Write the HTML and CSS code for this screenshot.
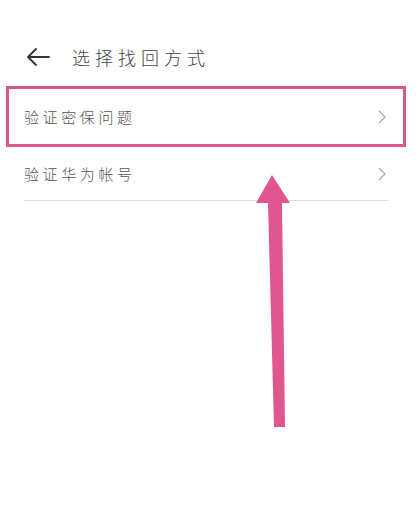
FILE: index.html
```html
<!DOCTYPE html>
<html lang="zh">
<head>
<meta charset="utf-8">
<link rel="stylesheet" href="styles.css">
</head>
<body>
<div class="page">
  <header class="header">
    <svg class="back" width="24" height="18" viewBox="0 0 24 18"><path d="M23 9H2M10 1L2 9l8 8" fill="none" stroke="#333" stroke-width="1.8" stroke-linecap="round" stroke-linejoin="round"/></svg>
    <h1 class="title">选择找回方式</h1>
  </header>
  <div class="list">
    <div class="row row-hl">
      <span class="label">验证密保问题</span>
      <svg class="chev" width="8" height="14" viewBox="0 0 8 14"><path d="M1 1l6 6-6 6" fill="none" stroke="#aaa" stroke-width="1.3"/></svg>
    </div>
    <div class="row row-2">
      <span class="label">验证华为帐号</span>
      <svg class="chev" width="8" height="14" viewBox="0 0 8 14"><path d="M1 1l6 6-6 6" fill="none" stroke="#aaa" stroke-width="1.3"/></svg>
    </div>
  </div>
  <svg class="annot" width="418" height="532" viewBox="0 0 418 532"><polygon points="272,175 290,203 282,203 285,427 274,427 268,203 256,203" fill="#e0568f"/></svg>
</div>
</body>
</html>
```
FILE: styles.css
```css
* { box-sizing: border-box; }
html, body { margin: 0; padding: 0; background: #fff; }
.page {
  position: relative;
  width: 418px;
  height: 532px;
  overflow: hidden;
  font-family: "Noto Sans CJK SC", "Noto Sans", sans-serif;
  color: #555;
}
.header {
  display: flex;
  align-items: center;
  height: 34px;
  margin-top: 40px;
  padding-left: 26px;
}
.back { display: block; }
.title {
  margin: 0 0 0 22px;
  font-size: 18px;
  font-weight: 300;
  letter-spacing: 5px;
  color: #444;
}
.list {
  margin-top: 12px;
  padding: 0 12px 0 6px;
}
.row {
  display: flex;
  align-items: center;
  justify-content: space-between;
}
.row-hl {
  height: 61px;
  border: 3px solid #d7598b;
  padding: 0 17px 0 15px;
}
.row-2 {
  height: 54px;
  margin: 0 18px;
  padding: 0 2px 0 0;
  border-bottom: 1px solid #dcdcdc;
}
.label {
  font-size: 15px;
  font-weight: 300;
  letter-spacing: 3.6px;
  color: #555;
}
.chev { display: block; }
.annot {
  position: absolute;
  left: 0;
  top: 0;
}
```
